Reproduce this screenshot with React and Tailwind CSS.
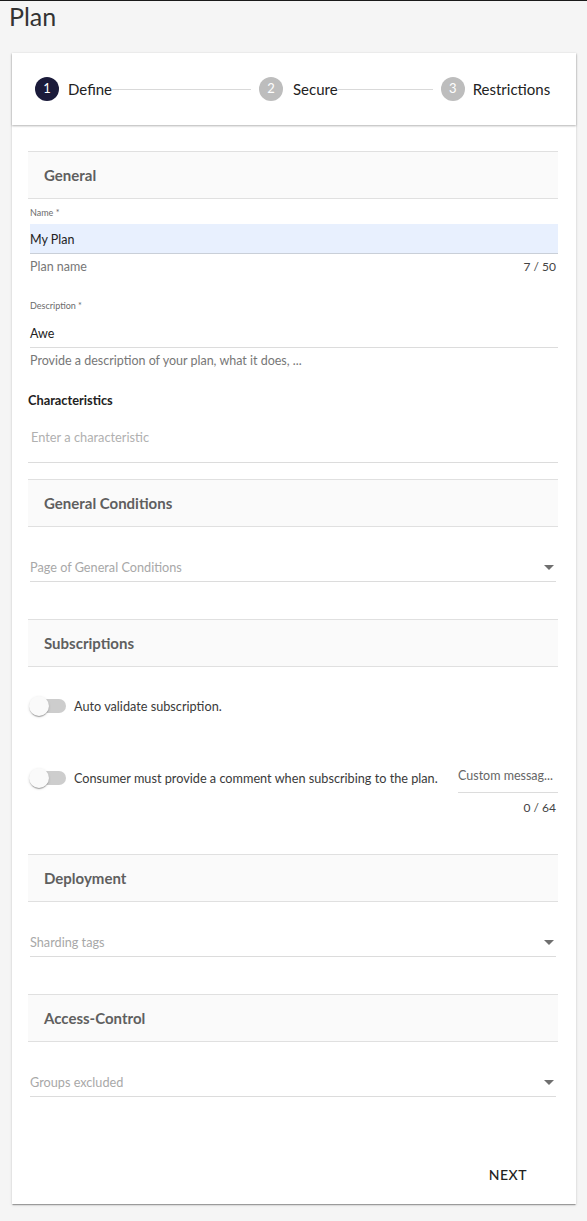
import React from 'react';

const font = { fontFamily: 'Lato, "Noto Sans", sans-serif' };

function StepCircle({ n, active }) {
  return (
    <div
      className={`w-6 h-6 rounded-full flex items-center justify-center text-[13px] text-white shrink-0 ${
        active ? 'bg-[#1b1b3a]' : 'bg-[#bdbdbd]'
      }`}
    >
      {n}
    </div>
  );
}

function SectionHeader({ title, className = '' }) {
  return (
    <div
      className={`h-[48px] border-y border-[#e0e0e0] bg-[#fafafa] flex items-center pl-4 text-[15px] font-bold text-[#5f5f5f] ${className}`}
    >
      {title}
    </div>
  );
}

function SelectField({ placeholder }) {
  return (
    <div className="mt-[26px] mx-[2px] h-[29px] border-b border-[#dcdcdc] flex items-center justify-between">
      <span className="pt-[2px] text-[12.7px] text-[#a8a8a8]">{placeholder}</span>
      <span className="w-0 h-0 mr-[2px] border-l-[5px] border-r-[5px] border-t-[5px] border-l-transparent border-r-transparent border-t-[#6f6f6f]" />
    </div>
  );
}

function Toggle() {
  return (
    <div className="relative w-[36px] h-[20px] shrink-0 flex items-center">
      <div className="w-[36px] h-[14px] rounded-full bg-[#cdcdcd]" />
      <div className="absolute left-[-1px] top-0 w-5 h-5 rounded-full bg-[#fafafa] shadow-[0_2px_1px_-1px_rgba(0,0,0,0.2),0_1px_1px_0_rgba(0,0,0,0.14),0_1px_3px_0_rgba(0,0,0,0.12)]" />
    </div>
  );
}

export default function App() {
  return (
    <div className="min-h-[1221px] bg-[#f5f5f5] border-t border-[#1a1a1a]" style={font}>
      {/* Title */}
      <div className="h-[32px] flex items-center pl-[9px] text-[25px] text-[#333]">Plan</div>

      {/* Card */}
      <div className="mt-[20px] ml-[12px] w-[564px] bg-white shadow-[0_2px_1px_-1px_rgba(0,0,0,0.2),0_1px_1px_0_rgba(0,0,0,0.14),0_1px_3px_0_rgba(0,0,0,0.12)]">
        {/* Stepper */}
        <div className="relative h-[72px] flex items-center pl-[23px] shadow-[0_1px_2px_rgba(0,0,0,0.3)]">
          <StepCircle n="1" active />
          <span className="ml-[9px] text-[15px] text-[#222]">Define</span>
          <div className="w-[139px] h-px bg-[#d9d9d9] mr-[8px]" />
          <StepCircle n="2" />
          <span className="ml-[10px] text-[15px] text-[#222]">Secure</span>
          <div className="w-[95px] h-px bg-[#d9d9d9] mr-[8px]" />
          <StepCircle n="3" />
          <span className="ml-[8px] text-[15px] text-[#222]">Restrictions</span>
        </div>

        {/* Content */}
        <div className="pl-4 pr-[18px]">
          <SectionHeader title="General" className="mt-[26px]" />

          {/* Name */}
          <div className="h-[25px] flex items-center pl-[2px] pt-[2px] text-[9px] text-[#6b6b6b]">Name *</div>
          <div className="ml-[2px] h-[30px] bg-[#e8f0fe] border-b border-[#c9cfd8] flex items-center pt-[3px] text-[12.5px] text-[#222]">
            My Plan
          </div>
          <div className="h-[24px] flex items-center justify-between pl-[2px] pr-[2px] pt-[2px] text-[12.5px] text-[#777]">
            <span>Plan name</span>
            <span className="text-[12px] text-[#444]">7 / 50</span>
          </div>

          {/* Description */}
          <div className="mt-[14px] h-[26px] flex items-center pl-[2px] pt-[2px] text-[9px] text-[#6b6b6b]">Description *</div>
          <div className="ml-[2px] h-[30px] border-b border-[#dcdcdc] flex items-center pt-[3px] text-[12.5px] text-[#222]">Awe</div>
          <div className="h-[24px] flex items-center pl-[2px] pt-[2px] text-[12.5px] text-[#777]">
            Provide a description of your plan, what it does, ...
          </div>

          {/* Characteristics */}
          <div className="mt-[18px] h-[20px] flex items-center pt-[2px] text-[12.8px] font-bold text-[#222]">Characteristics</div>
          <div className="h-[53px] border-b border-[#dcdcdc] flex items-center pl-[3px] pt-[4px] text-[12.8px] text-[#b0b0b0]">
            Enter a characteristic
          </div>

          <SectionHeader title="General Conditions" className="mt-[16px]" />
          <SelectField placeholder="Page of General Conditions" />

          <SectionHeader title="Subscriptions" className="mt-[37px]" />
          <div className="mt-[26px] h-[26px] flex items-center pl-[2px] gap-[8px]">
            <Toggle />
            <span className="pt-[2px] text-[12.7px] text-[#3a3a3a]">Auto validate subscription.</span>
          </div>

          <div className="mt-[43px] flex items-start pl-[2px]">
            <div className="mt-[3px] h-[26px] flex items-center gap-[8px]">
              <Toggle />
              <span className="pt-[2px] text-[12.7px] text-[#3a3a3a] whitespace-nowrap">
                Consumer must provide a comment when subscribing to the plan.
              </span>
            </div>
            <div className="ml-auto w-[100px]">
              <div className="h-[31px] border-b border-[#dcdcdc] pt-[7px] text-[12.5px] leading-[14px] text-[#666] whitespace-nowrap overflow-hidden">
                Custom messag...
              </div>
              <div className="h-[28px] flex items-center justify-end pr-[2px] pt-[1px] text-[12px] text-[#444]">0 / 64</div>
            </div>
          </div>

          <SectionHeader title="Deployment" className="mt-[33px]" />
          <SelectField placeholder="Sharding tags" />

          <SectionHeader title="Access-Control" className="mt-[37px]" />
          <SelectField placeholder="Groups excluded" />
        </div>

        {/* Actions */}
        <div className="mt-[59px] pb-[12px] flex justify-end pr-[33px]">
          <button className="h-[36px] px-4 text-[14px] font-medium tracking-[0.5px] text-[#222]">NEXT</button>
        </div>
      </div>
    </div>
  );
}
